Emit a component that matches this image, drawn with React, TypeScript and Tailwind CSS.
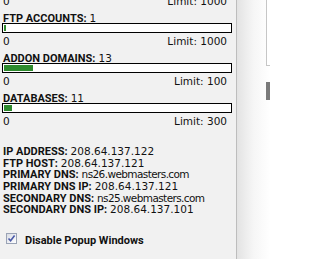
const usage = [
  { label: "FTP ACCOUNTS:", used: 1, limit: 1000 },
  { label: "ADDON DOMAINS:", used: 13, limit: 100 },
  { label: "DATABASES:", used: 11, limit: 300 },
];

const info = [
  { label: "IP ADDRESS:", value: "208.64.137.122" },
  { label: "FTP HOST:", value: "208.64.137.121" },
  { label: "PRIMARY DNS:", value: "ns26.webmasters.com", host: true },
  { label: "PRIMARY DNS IP:", value: "208.64.137.121" },
  { label: "SECONDARY DNS:", value: "ns25.webmasters.com", host: true },
  { label: "SECONDARY DNS IP:", value: "208.64.137.101" },
];

const valueFont = "font-['DejaVu_Sans',Verdana,sans-serif] text-[10.5px]";
const labelFont = "font-['Roboto',Tahoma,sans-serif] text-[11px] font-bold";

function LimitRow({ limit }: { limit: number }) {
  return (
    <div className={`flex h-[12px] justify-between pl-[3px] pr-[9px] leading-[12px] text-[#111] ${valueFont}`}>
      <span>0</span>
      <span>Limit: {limit}</span>
    </div>
  );
}

function UsageBlock({ label, used, limit }: { label: string; used: number; limit: number }) {
  const pct = (used / limit) * 100;
  return (
    <div>
      <div className="mt-[3px] h-[12px] whitespace-nowrap pl-[3px] leading-[12px] text-[#111]">
        <span className={labelFont}>{label}</span>
        <span className={`ml-[3px] ${valueFont}`}>{used}</span>
      </div>
      <div className="ml-[2px] mt-[1px] h-[10px] w-[230px] border border-black bg-white p-[1px]">
        <div className="h-full bg-[#2e8b2e]" style={{ width: `max(2px, ${pct}%)` }} />
      </div>
      <div className="mt-[2px]">
        <LimitRow limit={limit} />
      </div>
    </div>
  );
}

export default function App() {
  return (
    <div className="flex h-[259px] w-[270px] overflow-hidden bg-white">
      <div className="w-[237px] shrink-0 border-r border-[#bdbdbd] bg-[#f1f1f1]">
        <div className="-mt-[5px]">
          <LimitRow limit={1000} />
          {usage.map((u) => (
            <UsageBlock key={u.label} {...u} />
          ))}
        </div>

        <div className="mt-[17px] pl-[3px] text-[#111]">
          {info.map((row) => (
            <div key={row.label} className="h-[11.67px] whitespace-nowrap leading-[11.67px]">
              <span className={labelFont}>{row.label}</span>
              <span className={`ml-[3px] ${valueFont} ${row.host ? "tracking-[-0.6px]" : ""}`}>
                {row.value}
              </span>
            </div>
          ))}
        </div>

        <label className="ml-[6px] mt-[19px] flex items-start gap-[8px]">
          <span className="mt-[0.5px] flex h-[11px] w-[11px] items-center justify-center border border-[#9aa3b5] bg-gradient-to-br from-[#d9dce4] to-white">
            <svg viewBox="0 0 9 9" className="h-[9px] w-[9px]">
              <path d="M1.5 4.5 L3.6 6.8 L7.6 1.6" fill="none" stroke="#4a5aa8" strokeWidth="1.6" />
            </svg>
          </span>
          <span className={`${labelFont} mt-[2.5px] leading-[12px] text-[#111]`}>Disable Popup Windows</span>
        </label>
      </div>

      <div className="flex flex-1 bg-gradient-to-r from-[#e3e3e3] via-[#f6f6f6] to-white">
        <div className="ml-auto flex w-[4px] flex-col">
          <div className="h-[66px] border-b border-l border-[#c6c6c6] bg-white" />
          <div className="mt-[16px] h-[18px] bg-[#7a7a7a]" />
        </div>
      </div>
    </div>
  );
}
